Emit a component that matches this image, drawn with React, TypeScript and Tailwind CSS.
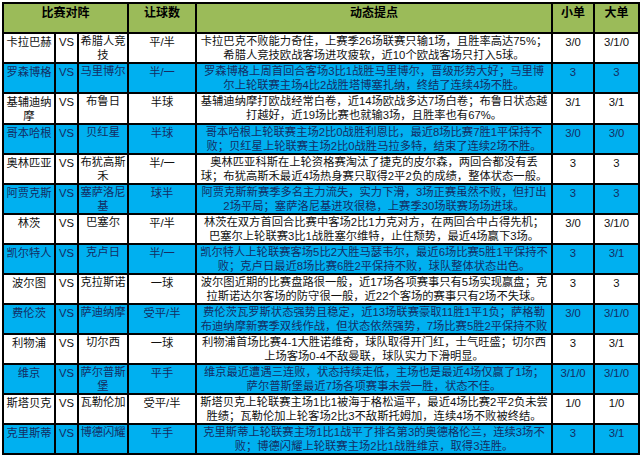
type Row = {
  home: string
  away: string
  line: string
  notes: [string, string]
  small: string
  big: string
}

const rows: Row[] = [
  { home: "卡拉巴赫", away: "希腊人竞技", line: "平/半", notes: ["卡拉巴克不败能力奇佳，上赛季26场联赛只输1场，且胜率高达75%；", "希腊人竞技欧战客场进攻疲软，近10个欧战客场只打入5球。"], small: "3/0", big: "3/1/0" },
  { home: "罗森博格", away: "马里博尔", line: "半/一", notes: ["罗森博格上周首回合客场3比1战胜马里博尔，晋级形势大好；马里博", "尔上轮联赛主场4比2战胜塔博塞扎纳，终结了连续4场不胜。"], small: "3", big: "3" },
  { home: "基辅迪纳摩", away: "布鲁日", line: "半球", notes: ["基辅迪纳摩打欧战经常白卷，近14场欧战多达7场白卷；布鲁日状态越", "打越好，近19场比赛也就输3场，且胜率也有67%。"], small: "3/1", big: "3/1" },
  { home: "哥本哈根", away: "贝红星", line: "半球", notes: ["哥本哈根上轮联赛主场2比0战胜利恩比，最近8场比赛7胜1平保持不", "败；贝红星上轮联赛主场2比0战胜马拉多特，结束了连续2场不胜。"], small: "3/0", big: "3/0" },
  { home: "奥林匹亚", away: "布犹高斯禾", line: "半/一", notes: ["奥林匹亚科斯在上轮资格赛淘汰了捷克的皮尔森，两回合都没有丢", "球；布犹高斯禾最近4场热身赛只取得2平2负的成绩，整体状态一般。"], small: "3", big: "3" },
  { home: "阿贾克斯", away: "塞萨洛尼基", line: "球半", notes: ["阿贾克斯新赛季多名主力流失，实力下滑，3场正赛虽然不败，但打出", "2场平局；塞萨洛尼基进攻很稳，上赛季30场联赛场场进球。"], small: "3", big: "3" },
  { home: "林茨", away: "巴塞尔", line: "平/半", notes: ["林茨在双方首回合比赛中客场2比1力克对方，在两回合中占得先机；", "巴塞尔上轮联赛3比1战胜塞尔维特，止住颓势，最近4场赢下3场。"], small: "3/0", big: "3/1/0" },
  { home: "凯尔特人", away: "克卢日", line: "半/一", notes: ["凯尔特人上轮联赛客场5比2大胜马瑟韦尔，最近6场比赛5胜1平保持不", "败；克卢日最近8场比赛6胜2平保持不败，球队整体状态出色。"], small: "3", big: "3/1" },
  { home: "波尔图", away: "克拉斯诺", line: "一球", notes: ["波尔图近期的比赛盘路很一般，近17场各项赛事只有5场实现赢盘；克", "拉斯诺达尔客场的防守很一般，近22个客场的赛事只有2场不失球。"], small: "3", big: "3" },
  { home: "费伦茨", away: "萨迪纳摩", line: "受平/半", notes: ["费伦茨瓦罗斯状态强势且稳定，近13场联赛豪取11胜1平1负；萨格勒", "布迪纳摩新赛季双线作战，但状态依然强势，7场比赛5胜2平保持不败"], small: "3/0", big: "3/1/0" },
  { home: "利物浦", away: "切尔西", line: "一球", notes: ["利物浦首场比赛4-1大胜诺维奇，球队取得开门红，士气旺盛；切尔西", "上场客场0-4不敌曼联，球队实力下滑明显。"], small: "3", big: "3/1" },
  { home: "维京", away: "萨尔普斯堡", line: "平手", notes: ["维京最近遭遇三连败，状态持续走低，主场也是最近4场仅赢了1场；", "萨尔普斯堡最近7场各项赛事未尝一胜，状态不佳。"], small: "3/1/0", big: "3/1/0" },
  { home: "斯塔贝克", away: "瓦勒伦加", line: "受平/半", notes: ["斯塔贝克上轮联赛主场1比1被海于格松逼平，最近4场比赛2平2负未尝", "胜绩；瓦勒伦加上轮客场2比3不敌斯托姆加，连续4场不败被终结。"], small: "1/0", big: "1/0" },
  { home: "克里斯蒂", away: "博德闪耀", line: "平手", notes: ["克里斯蒂上轮联赛主场1比1战平了排名第3的奥德格伦兰，连续3场不", "败；博德闪耀上轮联赛主场2比1战胜维京，取得3连胜。"], small: "3", big: "3/1" },
]

const cell = "border-2 border-black align-top text-center p-0 leading-[14px]"
const head = "border-2 border-black align-top text-center p-0 pt-[2px] leading-[15px] font-bold text-[12px] text-black"

export default function App() {
  return (
    <div className="w-[640px] h-[457px] bg-white pl-[2px] pt-[2px] overflow-hidden font-['Liberation_Sans','Noto_Sans_CJK_SC',sans-serif]">
      <table className="table-fixed border-collapse w-[636px] text-[11.3px]">
        <colgroup>
          <col className="w-[52px]" />
          <col className="w-[23px]" />
          <col className="w-[50px]" />
          <col className="w-[68px]" />
          <col className="w-[356px]" />
          <col className="w-[42px]" />
          <col className="w-[45px]" />
        </colgroup>
        <thead>
          <tr className="h-[30px] bg-[#9bbb59]">
            <th colSpan={3} className={head}>比赛对阵</th>
            <th className={head}>让球数</th>
            <th className={head}>动态提点</th>
            <th className={head}>小单</th>
            <th className={head}>大单</th>
          </tr>
        </thead>
        <tbody>
          {rows.map((r, i) => {
            const blue = i % 2 === 1
            return (
              <tr key={i} className={`h-[30px] ${blue ? "bg-[#00b0f0] text-[#142d63]" : "bg-white text-[#111]"}`}>
                <td className={`${cell} px-[1px] pt-[1px]`}>{r.home}</td>
                <td className={`${cell} pt-[1px]`}>VS</td>
                <td className={`${cell} px-[1px]`}>{r.away}</td>
                <td className={`${cell} pt-[1px]`}>{r.line}</td>
                <td className={`${cell} whitespace-nowrap overflow-hidden`}>
                  <div>{r.notes[0]}</div>
                  <div>{r.notes[1]}</div>
                </td>
                <td className={`${cell} pt-[1px]`}>{r.small}</td>
                <td className={`${cell} pt-[1px]`}>{r.big}</td>
              </tr>
            )
          })}
        </tbody>
      </table>
    </div>
  )
}
